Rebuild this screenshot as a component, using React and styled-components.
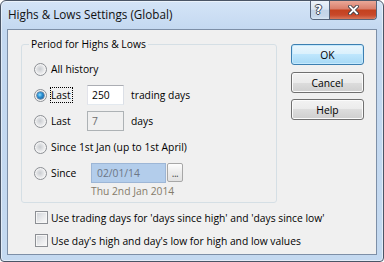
import React from "react";
import styled, { createGlobalStyle, css } from "styled-components";

const GlobalStyle = createGlobalStyle`
  html, body { margin: 0; padding: 0; background: #ffffff; }
  body {
    font-family: "Open Sans", "Noto Sans", sans-serif;
    font-size: 10.3px;
    color: #000;
  }
  * { box-sizing: border-box; }
`;

const Window = styled.div`
  width: 384px;
  height: 262px;
  border: 1px solid #4a5566;
  border-radius: 6px 6px 4px 4px;
  background: linear-gradient(#d4e4f7 0px, #c3d8f0 30px, #c4d9f0 100%);
  box-shadow: inset 0 0 0 1px rgba(255, 255, 255, 0.5);
  display: flex;
  flex-direction: column;
  padding: 0 6px 6px;
  overflow: hidden;
`;

const TitleBar = styled.div`
  height: 28px;
  flex: none;
  display: flex;
  align-items: flex-start;
  padding-left: 1px;
`;

const Caption = styled.div`
  padding-top: 5px;
  line-height: 16px;
  font-size: 11.7px;
  color: #111;
  white-space: nowrap;
`;

const CaptionButtons = styled.div`
  margin-left: auto;
  display: flex;
  height: 19px;
  border: 1px solid #56647a;
  border-top: none;
  border-radius: 0 0 4px 4px;
  overflow: hidden;
`;

const CapButton = styled.div`
  height: 100%;
  display: flex;
  align-items: center;
  justify-content: center;
  ${(p) =>
    p.$close
      ? css`
          width: 46px;
          background: linear-gradient(#eaa898 0%, #da806d 42%, #c4411f 52%, #c8482a 78%, #d8785c 100%);
        `
      : css`
          width: 19px;
          border-right: 1px solid #56647a;
          background: linear-gradient(#edf3fa 0%, #d9e5f2 45%, #c3d4e8 52%, #c7d7ea 85%, #d9e6f4 100%);
        `}
`;

const HelpGlyph = styled.span`
  font-family: "DejaVu Sans", sans-serif;
  font-weight: bold;
  font-size: 12px;
  line-height: 12px;
  color: #ffffff;
  margin-right: 3px;
  text-shadow: 1px 0 0 #3b4656, -1px 0 0 #3b4656, 0 1px 0 #3b4656, 0 -1px 0 #3b4656;
`;

const Client = styled.div`
  flex: 1;
  border: 1px solid #7d8fa7;
  background: #f0f0f0;
  display: flex;
  align-items: flex-start;
  gap: 14px;
  padding: 7px 0 0 13px;
`;

const LeftCol = styled.div`
  width: 256px;
  display: flex;
  flex-direction: column;
`;

const Group = styled.fieldset`
  margin: 0;
  min-width: 0;
  width: 256px;
  border: 1px solid #d5dfe5;
  border-radius: 3px;
  padding: 0 0 4px 0;
`;

const Legend = styled.legend`
  margin-left: 7px;
  padding: 0 2px;
  line-height: 14px;
`;

const Options = styled.div`
  padding: 5px 0 0 12px;
  display: flex;
  flex-direction: column;
`;

const OptionRow = styled.div`
  height: 26px;
  display: flex;
  align-items: center;
`;

const Choice = styled.div`
  display: flex;
  align-items: center;
  gap: 3px;
  flex: none;
  width: ${(p) => (p.$w ? `${p.$w}px` : "auto")};
`;

const Radio = styled.span`
  position: relative;
  width: 13px;
  height: 13px;
  flex: none;
  border-radius: 50%;
  border: 1px solid #8c8f94;
  background: radial-gradient(circle at 45% 45%, #c9ccd0 0%, #e6e7e9 45%, #fbfbfb 80%);
  box-shadow: inset 0 0 0 1px #f4f4f4;
  ${(p) =>
    p.$checked &&
    css`
      &::after {
        content: "";
        position: absolute;
        left: 2px;
        top: 2px;
        width: 7px;
        height: 7px;
        border-radius: 50%;
        background: radial-gradient(circle at 40% 40%, #8ee0ff 0%, #2a8fd3 40%, #174f86 100%);
        box-shadow: 0 0 0 0.5px #2c4f72;
      }
    `}
`;

const OptLabel = styled.span`
  line-height: 14px;
  border: 1px dotted ${(p) => (p.$focused ? "#000" : "transparent")};
  padding-right: 1px;
  white-space: nowrap;
`;

const TextBox = styled.input`
  width: 37px;
  height: 20px;
  flex: none;
  margin: 0;
  font: inherit;
  padding: 0 0 0 4px;
  outline: none;
  border: 1px solid #abadb3;
  border-color: #abadb3 #dbdfe6 #e3e9ef #e2e3ea;
  background: ${(p) => (p.disabled ? "#f0f0f0" : "#ffffff")};
  color: ${(p) => (p.disabled ? "#6d6d6d" : "#000")};
  ${(p) =>
    p.disabled &&
    css`
      border-color: #adb2b5;
    `}
`;

const SideText = styled.span`
  margin-left: 7px;
  white-space: nowrap;
`;

const DateField = styled.div`
  display: flex;
  align-items: flex-start;
  gap: 1px;
`;

const DateBox = styled.div`
  width: 75px;
  height: 20px;
  border: 1px solid #9db6d6;
  background: #b3cdeb;
  color: #6c7686;
  padding-left: 5px;
  line-height: 18px;
`;

const EllipsisButton = styled.div`
  width: 16px;
  height: 19px;
  border: 1px solid #a7a7a7;
  border-radius: 2px;
  background: linear-gradient(#fdfdfd, #ececec 50%, #e2e2e2);
  color: #444;
  font-size: 10px;
  line-height: 10px;
  display: flex;
  align-items: flex-end;
  justify-content: center;
  padding-bottom: 3px;
  letter-spacing: -0.5px;
`;

const DateNote = styled.div`
  margin: -2px 0 0 57px;
  line-height: 14px;
  color: #857b6a;
  white-space: nowrap;
`;

const CheckList = styled.div`
  margin-top: 3px;
  padding-left: 14px;
  display: flex;
  flex-direction: column;
`;

const CheckRow = styled.div`
  height: 23px;
  display: flex;
  align-items: center;
  gap: 3px;
  white-space: nowrap;
`;

const Check = styled.span`
  width: 13px;
  height: 13px;
  flex: none;
  border: 1px solid #8c8f94;
  background: linear-gradient(135deg, #cdd1d6 0%, #e9eaec 55%, #fbfbfb 100%);
  box-shadow: inset 0 0 0 1px #f6f6f6;
`;

const ButtonCol = styled.div`
  padding-top: 7px;
  display: flex;
  flex-direction: column;
  gap: 6px;
`;

const DlgButton = styled.div`
  width: 73px;
  height: 21px;
  border-radius: 3px;
  display: flex;
  align-items: center;
  justify-content: center;
  line-height: 14px;
  ${(p) =>
    p.$default
      ? css`
          margin-bottom: 1px;
          border: 1px solid #3c7fb1;
          background: linear-gradient(#eaf6fd 0%, #d9f0fc 50%, #bee6fd 50%, #a7d9f5 100%);
          box-shadow: inset 0 0 0 1px #c5e9fd;
        `
      : css`
          border: 1px solid #707070;
          background: linear-gradient(#f2f2f2 0%, #ebebeb 50%, #dddddd 50%, #cfcfcf 100%);
          box-shadow: inset 0 0 0 1px #fbfbfb;
        `}
`;

function CloseGlyph() {
  return (
    <svg width="11" height="10" viewBox="0 0 11 10">
      <path d="M2 1.5 L9 8.5 M9 1.5 L2 8.5" stroke="#3b3f47" strokeWidth="3.6" strokeLinecap="square" fill="none" />
      <path d="M2 1.5 L9 8.5 M9 1.5 L2 8.5" stroke="#ffffff" strokeWidth="1.8" strokeLinecap="square" fill="none" />
    </svg>
  );
}

export default function App() {
  return (
    <>
      <GlobalStyle />
      <Window>
        <TitleBar>
          <Caption>Highs &amp; Lows Settings (Global)</Caption>
          <CaptionButtons>
            <CapButton>
              <HelpGlyph>?</HelpGlyph>
            </CapButton>
            <CapButton $close>
              <CloseGlyph />
            </CapButton>
          </CaptionButtons>
        </TitleBar>
        <Client>
          <LeftCol>
            <Group>
              <Legend>Period for Highs &amp; Lows</Legend>
              <Options>
                <OptionRow>
                  <Choice>
                    <Radio />
                    <OptLabel>All history</OptLabel>
                  </Choice>
                </OptionRow>
                <OptionRow>
                  <Choice $w={53}>
                    <Radio $checked />
                    <OptLabel $focused>Last</OptLabel>
                  </Choice>
                  <TextBox readOnly value="250" />
                  <SideText>trading days</SideText>
                </OptionRow>
                <OptionRow>
                  <Choice $w={53}>
                    <Radio />
                    <OptLabel>Last</OptLabel>
                  </Choice>
                  <TextBox disabled readOnly value="7" />
                  <SideText>days</SideText>
                </OptionRow>
                <OptionRow>
                  <Choice>
                    <Radio />
                    <OptLabel>Since 1st Jan (up to 1st April)</OptLabel>
                  </Choice>
                </OptionRow>
                <OptionRow>
                  <Choice $w={57}>
                    <Radio />
                    <OptLabel>Since</OptLabel>
                  </Choice>
                  <DateField>
                    <DateBox>02/01/14</DateBox>
                    <EllipsisButton>...</EllipsisButton>
                  </DateField>
                </OptionRow>
                <DateNote>Thu 2nd Jan 2014</DateNote>
              </Options>
            </Group>
            <CheckList>
              <CheckRow>
                <Check />
                <span>Use trading days for 'days since high' and 'days since low'</span>
              </CheckRow>
              <CheckRow>
                <Check />
                <span>Use day's high and day's low for high and low values</span>
              </CheckRow>
            </CheckList>
          </LeftCol>
          <ButtonCol>
            <DlgButton $default>OK</DlgButton>
            <DlgButton>Cancel</DlgButton>
            <DlgButton>Help</DlgButton>
          </ButtonCol>
        </Client>
      </Window>
    </>
  );
}
